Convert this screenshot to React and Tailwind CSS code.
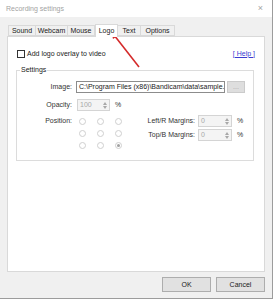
import React from 'react';

const tabs = [
	{label: 'Sound', w: 'w-[28px]'},
	{label: 'Webcam', w: 'w-[32px]'},
	{label: 'Mouse', w: 'w-[27px]'},
	{label: 'Logo', w: 'w-[23px]', active: true},
	{label: 'Text', w: 'w-[23px]'},
	{label: 'Options', w: 'w-[34px]'},
];

function Spinner() {
	return (
		<div className="flex flex-col items-center justify-center gap-[1px] w-[6px] h-full">
			<svg width="4" height="3" viewBox="0 0 4 3"><path d="M0 3 L2 0 L4 3 Z" fill="#a8a8a8" /></svg>
			<svg width="4" height="3" viewBox="0 0 4 3"><path d="M0 0 L4 0 L2 3 Z" fill="#a8a8a8" /></svg>
		</div>
	);
}

function SpinBox({value, w}) {
	return (
		<div className={`flex items-center h-[12px] ${w} bg-[#f4f4f4] border border-[#d4d4d4] pl-[2px] pr-[1px]`}>
			<span className="flex-1 text-[#a8a8a8]">{value}</span>
			<Spinner />
		</div>
	);
}

function Radio({checked}) {
	return (
		<div className="flex items-center justify-center h-[12px] w-[18px]">
			<div className="flex items-center justify-center w-[7px] h-[7px] rounded-full border border-[#cfcfcf] bg-white">
				{checked && <div className="w-[3px] h-[3px] rounded-full bg-[#a0a0a0]" />}
			</div>
		</div>
	);
}

export default function App() {
	return (
		<div className="relative w-[274px] h-[300px] bg-white text-[7px] leading-[8px] text-[#1a1a1a] font-['Liberation_Sans',Arial,sans-serif]">
			<div className="flex flex-col w-[273px] h-[299px] bg-[#f0f0f0] border-r border-b border-[#9c9c9c]">
				{/* title bar */}
				<div className="flex items-center justify-between h-[17px] bg-white pl-[6px] pr-[9px] text-[#a3a3a3]">
					<span>Recording settings</span>
					<span className="text-[9px] leading-[9px] font-light">×</span>
				</div>

				<div className="flex flex-col pl-[7px] pr-[7px] pt-[7px]">
					{/* tabs */}
					<div className="flex items-end h-[12px] pl-[1px] relative z-10">
						{tabs.map((t) =>
							t.active ? (
								<div key={t.label} className={`${t.w} h-[13px] -mb-[1px] flex items-center justify-center bg-white border border-b-0 border-[#d9d9d9]`}>
									{t.label}
								</div>
							) : (
								<div key={t.label} className={`${t.w} h-[11px] flex items-center justify-center bg-[#f0f0f0] border border-l-0 first:border-l border-[#d9d9d9]`}>
									{t.label}
								</div>
							)
						)}
					</div>

					{/* panel */}
					<div className="flex flex-col h-[236px] bg-white border border-[#d9d9d9] px-[8px] pt-[12px]">
						<div className="flex items-center justify-between h-[9px] pl-[1px] pr-[1px]">
							<div className="flex items-center gap-[2px]">
								<div className="w-[8px] h-[8px] border border-[#333] bg-white" />
								<span>Add logo overlay to video</span>
							</div>
							<span className="text-[#3b3bd0] underline">[ Help ]</span>
						</div>

						<fieldset className="mt-[8px] mr-[2px] border border-[#dcdcdc] pb-[9px]">
							<legend className="ml-[3px] px-[1px]">Settings</legend>

							<div className="flex items-center h-[12px] mt-[7px]">
								<span className="w-[55px] text-right text-[#333]">Image:</span>
								<div className="ml-[4px] w-[149px] h-[12px] flex items-center border border-[#8c8c8c] bg-white px-[2px] overflow-hidden whitespace-nowrap">
									C:\Program Files (x86)\Bandicam\data\sample.
								</div>
								<div className="ml-[2px] w-[18px] h-[12px] flex items-center justify-center bg-[#dedede] border border-[#cbcbcb] text-[#a8a8a8]">
									...
								</div>
							</div>

							<div className="flex items-center h-[12px] mt-[6px]">
								<span className="w-[55px] text-right text-[#333]">Opacity:</span>
								<div className="ml-[5px]">
									<SpinBox value="100" w="w-[33px]" />
								</div>
								<span className="ml-[5px] text-[#333]">%</span>
							</div>

							<div className="flex mt-[4px]">
								<span className="w-[55px] h-[12px] flex items-center justify-end text-[#333]">Position:</span>
								<div className="ml-[1px] grid grid-cols-3">
									<Radio /><Radio /><Radio />
									<Radio /><Radio /><Radio />
									<Radio /><Radio /><Radio checked />
								</div>
								<div className="flex flex-col gap-[2px]">
									<div className="flex items-center h-[12px]">
										<span className="w-[68px] text-right text-[#333]">Left/R Margins:</span>
										<div className="ml-[3px]"><SpinBox value="0" w="w-[34px]" /></div>
										<span className="ml-[5px] text-[#333]">%</span>
									</div>
									<div className="flex items-center h-[12px]">
										<span className="w-[68px] text-right text-[#333]">Top/B Margins:</span>
										<div className="ml-[3px]"><SpinBox value="0" w="w-[34px]" /></div>
										<span className="ml-[5px] text-[#333]">%</span>
									</div>
								</div>
							</div>
						</fieldset>
					</div>

					{/* footer */}
					<div className="flex justify-end gap-[5px] mt-[5px] pr-[0px]">
						<button className="w-[49px] h-[15px] bg-[#e1e1e1] border border-[#adadad] text-[#1a1a1a]">OK</button>
						<button className="w-[49px] h-[15px] bg-[#e1e1e1] border border-[#adadad] text-[#1a1a1a]">Cancel</button>
					</div>
				</div>
			</div>

			{/* annotation arrow */}
			<svg className="absolute left-0 top-0 pointer-events-none" width="274" height="300">
				<line x1="139" y1="67" x2="114" y2="35" stroke="#d42a2a" strokeWidth="1.6" />
				<polygon points="111,30 119,35 113,39" fill="#d42a2a" />
			</svg>
		</div>
	);
}
